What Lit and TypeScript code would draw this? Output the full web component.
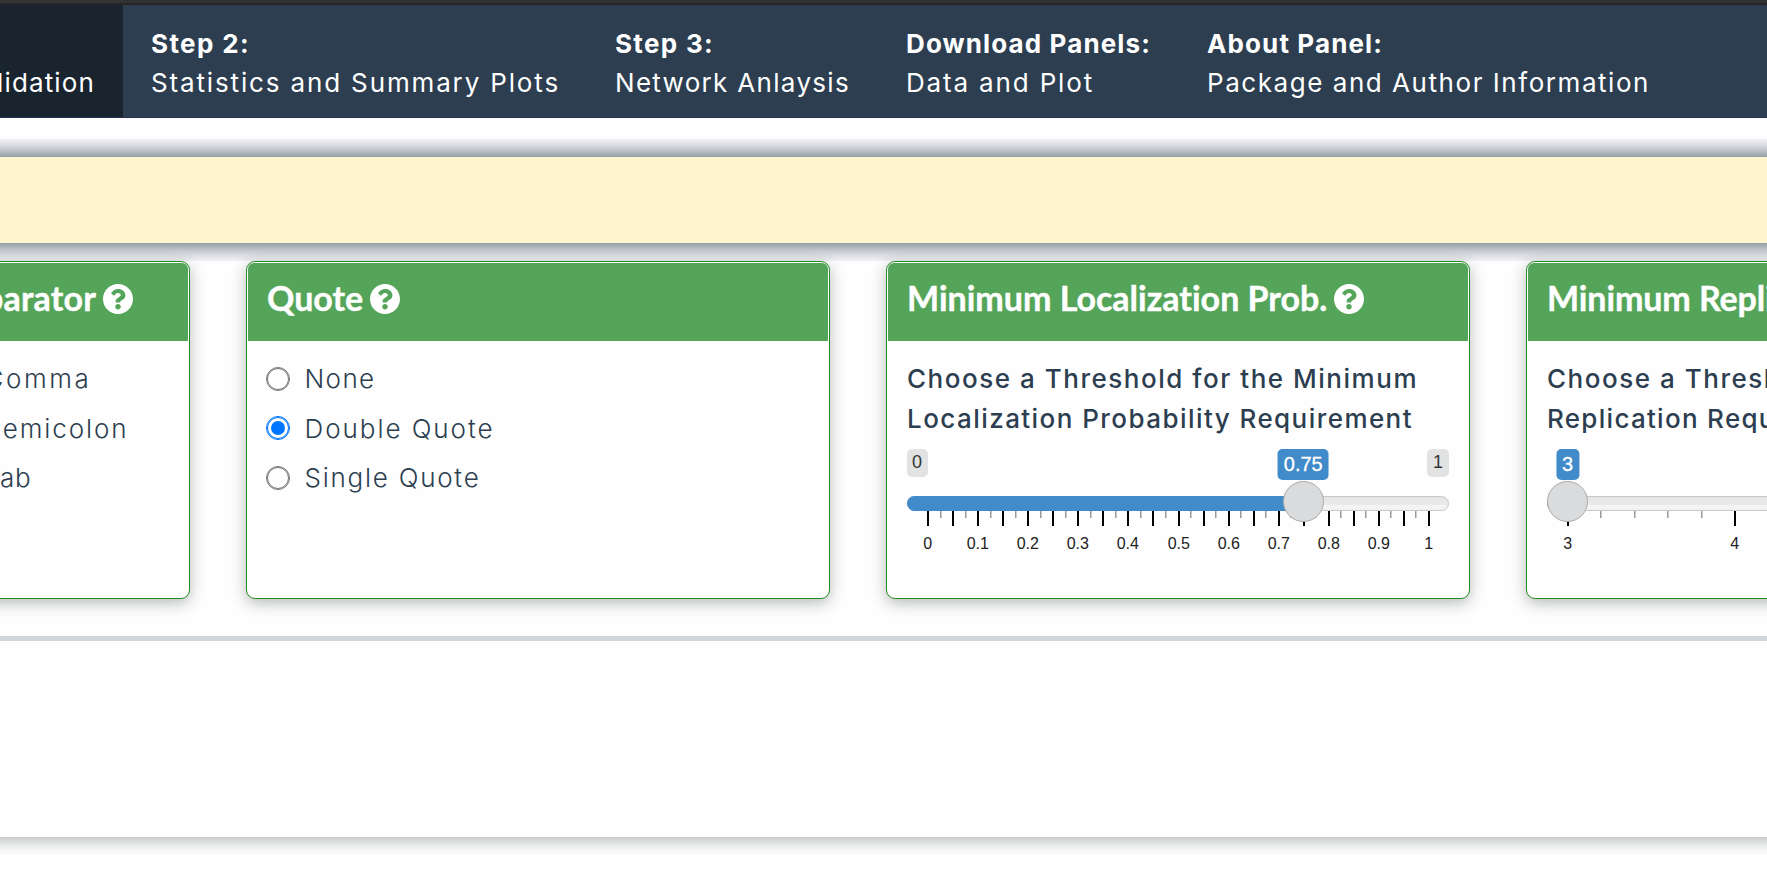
import { LitElement, html, svg, css, nothing } from "lit";
import { customElement, property, query } from "lit/decorators.js";

/* One line of text whose tracking is adjusted to fill a given width. */
@customElement("tracked-text")
class TrackedText extends LitElement {
  @property({ type: Number }) width = 0;
  @property() text = "";
  @query("span") line!: HTMLSpanElement;

  static styles = css`
    :host { display: block; white-space: nowrap; }
    span { display: inline-block; }
  `;

  updated() {
    if (!this.width) return;
    this.line.style.letterSpacing = "0px";
    const natural = this.line.getBoundingClientRect().width;
    this.line.style.letterSpacing = `${(this.width - natural) / this.text.length}px`;
  }

  render() {
    return html`<span>${this.text}</span>`;
  }
}

@customElement("help-icon")
class HelpIcon extends LitElement {
  static styles = css`
    :host { display: block; width: 30px; height: 30px; }
    svg { display: block; }
  `;
  render() {
    return html`<svg width="30" height="30" viewBox="8 8 496 496" fill="currentColor">
      <path d="M504 256c0 136.997-111.043 248-248 248S8 392.997 8 256C8 119.083 119.043 8 256 8s248 111.083 248 248zM262.655 90c-54.497 0-89.255 22.957-116.549 63.758-3.536 5.286-2.353 12.415 2.715 16.258l34.699 26.31c5.205 3.947 12.621 3.008 16.665-2.122 17.864-22.658 30.113-35.797 57.303-35.797 20.429 0 45.698 13.148 45.698 32.958 0 14.976-12.363 22.667-32.534 33.976C247.128 238.528 216 254.941 216 296v4c0 6.627 5.373 12 12 12h56c6.627 0 12-5.373 12-12v-1.333c0-28.462 83.186-29.647 83.186-106.667 0-58.002-60.165-102-116.531-102zM256 338c-25.365 0-46 20.635-46 46 0 25.364 20.635 46 46 46s46-20.636 46-46c0-25.365-20.635-46-46-46z"/>
    </svg>`;
  }
}

@customElement("range-slider")
class RangeSlider extends LitElement {
  @property({ type: Number }) min = 0;
  @property({ type: Number }) max = 1;
  @property({ type: Number }) value = 0;
  @property({ type: Number }) steps = 10;
  @property({ type: Number }) minor = 4;

  static styles = css`
    :host { display: block; width: 542px; height: 102px; position: relative; font-family: "Liberation Sans", Arial, sans-serif; }
    .limits { display: flex; justify-content: space-between; height: 47px; align-items: flex-start; }
    .limit { background: #e1e3e3; color: #333; font-size: 18px; line-height: 27px; height: 28px; padding: 0 5px; border-radius: 5px; box-sizing: border-box; min-width: 21px; }
    .limit.end { padding: 0 6px; }
    .limit.hidden { visibility: hidden; }
    .track { height: 15px; box-sizing: border-box; border: 1px solid #c8c8c8; border-radius: 8px; background: linear-gradient(#e6e6e6, #e9e9e9 60%, #f4f4f4 65%, #f2f2f2); }
    .fill { position: absolute; top: 47px; left: 0; height: 15px; background: #428bca; border-radius: 8px 0 0 8px; }
    .handle { position: absolute; top: 32px; width: 41px; height: 41px; margin-left: -20.5px; box-sizing: border-box; border: 1px solid #ababab; border-radius: 50%; background: #dadbdd; }
    .badge { position: absolute; top: 0; transform: translateX(-50%); background: #428bca; color: #fff; font-size: 20px; line-height: 31px; height: 31px; padding: 0 6px; border-radius: 5px; -webkit-text-stroke: 0.3px #fff; }
    .ticks { display: block; overflow: visible; }
    .major { fill: #000; }
    .small { fill: #999; }
    .ticks text { font-size: 16px; fill: #222; text-anchor: middle; }
  `;

  render() {
    const span = 501;
    const x = 20.5 + (span * (this.value - this.min)) / (this.max - this.min);
    const count = this.steps * (this.minor + 1);
    const middleIsMajor = this.minor === 3;
    const ticks = Array.from({ length: count + 1 }, (_, i) => {
      const tx = Math.round(20 + (span * i) / count);
      const labelled = i % (this.minor + 1) === 0;
      const big = labelled || (middleIsMajor && i % 2 === 0);
      const label = Math.round((this.min + ((this.max - this.min) * i) / count) * 100) / 100;
      return svg`
        <rect class=${big ? "major" : "small"} x=${tx} y="0" width=${big ? 2 : 1.5} height=${big ? 15 : 7}></rect>
        ${labelled ? svg`<text x=${tx + 0.8} y="38">${label}</text>` : nothing}`;
    });
    return html`
      <div class="limits">
        <span class="limit ${this.value === this.min ? "hidden" : ""}">${this.min}</span>
        <span class="limit end">${this.max}</span>
      </div>
      <div class="track"></div>
      <svg class="ticks" width="542" height="40">${ticks}</svg>
      <div class="fill" style="width:${x}px"></div>
      <div class="handle" style="left:${x}px"></div>
      <div class="badge" style="left:${x}px">${this.value}</div>
    `;
  }
}

const NAV = [
  { title: "Step 1:", tw: 98, sub: "Data Upload and Validation", sw: 362, w: 418, active: true },
  { title: "Step 2:", tw: 99, sub: "Statistics and Summary Plots", sw: 409, w: 464 },
  { title: "Step 3:", tw: 99, sub: "Network Anlaysis", sw: 235, w: 291 },
  { title: "Download Panels:", tw: 245, sub: "Data and Plot", sw: 188, w: 301 },
  { title: "About Panel:", tw: 176, sub: "Package and Author Information", sw: 443, w: 508 },
];

@customElement("app-root")
class AppRoot extends LitElement {
  static styles = css`
    :host { display: block; width: 1767px; height: 871px; overflow: hidden; background: #fefefe; color: #2c3e50; font-family: Inter, "Open Sans", sans-serif; font-size: 26px; }
    .chrome { height: 3px; background: #333; border-bottom: 2px solid #262626; }
    .nav { display: flex; height: 112px; background: #2c3e50; border-bottom: 1px solid #2c3050; color: #fff; margin-left: -295px; }
    .tab { flex: none; box-sizing: border-box; padding: 19px 28px 0; line-height: 39px; }
    .tab.active { background: #1a242f; }
    .title { font-weight: 700; }
    .banner { margin: 39px -60px 0; height: 86px; background: #fef4cd; box-shadow: 0 0 24px #2c3e50; clip-path: inset(-18px 0); }
    .cards { display: flex; gap: 56px; margin: 18px 0 0 -74px; width: 2300px; }
    .card { flex: none; position: relative; box-sizing: border-box; width: 584px; height: 338px; border: 1px solid #228b22; border-radius: 9px; padding: 1px; background: #fefefe; box-shadow: 0 4px 15px rgba(30, 40, 40, 0.32); }
    .card.narrow { width: 264px; }
    .head { display: flex; align-items: flex-start; gap: 7px; height: 78px; box-sizing: border-box; padding: 21px 19px 0; background: #54a559; border-radius: 6px 6px 0 0; color: #fff; font: 700 34px/28px Lato, sans-serif; -webkit-text-stroke: 0.4px #fff; white-space: nowrap; }
    .body { padding: 17px 19px 0; }
    .option { display: flex; align-items: center; height: 49.5px; gap: 15.5px; font-weight: 300; }
    .options { margin-top: -4px; }
    .radio { width: 22px; height: 22px; box-sizing: border-box; border: 1.6px solid #767676; border-radius: 50%; display: grid; place-items: center; background: #fff; outline: 0.4px solid #767676; outline-offset: -0.6px; }
    .radio.on { border-color: #0075ff; outline-color: #0075ff; }
    .radio.on::after { content: ""; width: 14px; height: 14px; border-radius: 50%; background: #0075ff; }
    .question { font-weight: 500; line-height: 40px; margin: 1px 0 10px; }
    .rule { height: 5px; margin-top: 37px; background: #d1d5db; position: relative; }
    .panel { height: 196px; margin: 0 -60px; background: #fefefe; box-shadow: 0 4px 15px rgba(30, 40, 40, 0.32); clip-path: inset(0 0 -18px); }
  `;

  option(text: string, width: number, on = false) {
    return html`<div class="option">
      <span class="radio ${on ? "on" : ""}"></span>
      <tracked-text .text=${text} .width=${width}></tracked-text>
    </div>`;
  }

  head(text: string, width: number) {
    return html`<div class="head">
      <tracked-text .text=${text} .width=${width}></tracked-text><help-icon></help-icon>
    </div>`;
  }

  render() {
    return html`
      <div class="chrome"></div>
      <nav class="nav">
        ${NAV.map((t) => html`
          <div class="tab ${t.active ? "active" : ""}" style="width:${t.w}px">
            <tracked-text class="title" .text=${t.title} .width=${t.tw}></tracked-text>
            <tracked-text .text=${t.sub} .width=${t.sw}></tracked-text>
          </div>`)}
      </nav>
      <div class="banner"></div>
      <div class="cards">
        <section class="card narrow">
          ${this.head("Separator", 149)}
          <div class="body"><div class="options">
            ${this.option("Comma", 107)}
            ${this.option("Semicolon", 144, true)}
            ${this.option("Tab", 47)}
          </div></div>
        </section>
        <section class="card">
          ${this.head("Quote", 96)}
          <div class="body"><div class="options">
            ${this.option("None", 71)}
            ${this.option("Double Quote", 190, true)}
            ${this.option("Single Quote", 176)}
          </div></div>
        </section>
        <section class="card">
          ${this.head("Minimum Localization Prob.", 421)}
          <div class="body">
            <div class="question">
              <tracked-text text="Choose a Threshold for the Minimum" .width=${511}></tracked-text>
              <tracked-text text="Localization Probability Requirement" .width=${506}></tracked-text>
            </div>
            <range-slider .min=${0} .max=${1} .value=${0.75} .steps=${10} .minor=${3}></range-slider>
          </div>
        </section>
        <section class="card">
          ${this.head("Minimum Replication", 320)}
          <div class="body">
            <div class="question">
              <tracked-text text="Choose a Threshold for the Minimum" .width=${511}></tracked-text>
              <tracked-text text="Replication Requirement" .width=${332}></tracked-text>
            </div>
            <range-slider .min=${3} .max=${6} .value=${3} .steps=${3} .minor=${4}></range-slider>
          </div>
        </section>
      </div>
      <div class="rule"></div>
      <div class="panel"></div>
    `;
  }
}
